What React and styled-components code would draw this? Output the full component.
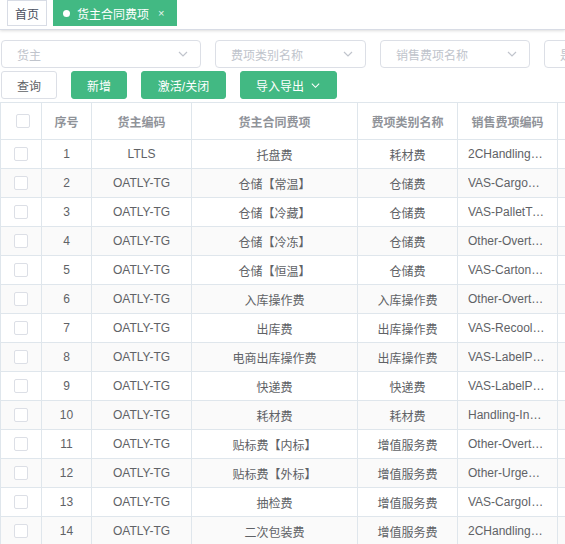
import React from 'react';
import styled, { createGlobalStyle } from 'styled-components';

const GlobalStyle = createGlobalStyle`
  html, body {
    margin: 0;
    padding: 0;
    background: #fff;
    overflow: hidden;
  }
  body {
    font-family: "Liberation Sans", "Noto Sans CJK SC", sans-serif;
    font-size: 12px;
    color: #606266;
  }
  * { box-sizing: border-box; }
`;

const Page = styled.div`
  width: 565px;
  height: 544px;
  overflow: hidden;
`;

const TabBar = styled.div`
  height: 30px;
  display: flex;
  align-items: flex-start;
  gap: 6px;
  padding-left: 7px;
  border-bottom: 1px solid #d8dce5;
  box-shadow: 0 1px 3px 0 rgba(0, 0, 0, 0.12), 0 0 3px 0 rgba(0, 0, 0, 0.04);
`;

const Tab = styled.div`
  height: 26px;
  display: flex;
  align-items: center;
  gap: 6px;
  padding: 0 ${(p) => (p.$active ? '12px' : '7px')} 0 ${(p) => (p.$active ? '9px' : '7px')};
  border: 1px solid ${(p) => (p.$active ? '#42b983' : '#d8dce5')};
  background: ${(p) => (p.$active ? '#42b983' : '#fff')};
  color: ${(p) => (p.$active ? '#fff' : '#495060')};
  font-size: 12px;
  white-space: nowrap;
`;

const Dot = styled.span`
  width: 7px;
  height: 7px;
  border-radius: 50%;
  background: #fff;
  margin-right: 1px;
`;

const Close = styled.span`
  font-size: 11px;
  margin-left: 3px;
  color: #e8f5ef;
`;

const Filters = styled.div`
  display: flex;
  gap: 14px;
  padding: 10px 0 0 1px;
  white-space: nowrap;
`;

const Select = styled.div`
  flex: none;
  width: ${(p) => p.$w}px;
  height: 28px;
  border: 1px solid #dcdfe6;
  border-radius: 4px;
  display: flex;
  align-items: center;
  justify-content: space-between;
  padding: 0 11px 0 15px;
  color: #c0c4cc;
  font-size: 12px;
  overflow: hidden;
`;

const Toolbar = styled.div`
  display: flex;
  gap: 14px;
  padding: 3px 0 0 1px;
`;

const Button = styled.div`
  height: 28px;
  width: ${(p) => p.$w}px;
  display: flex;
  align-items: center;
  justify-content: center;
  gap: 6px;
  border-radius: 3px;
  font-size: 12px;
  border: 1px solid ${(p) => (p.$plain ? '#dcdfe6' : '#42b983')};
  background: ${(p) => (p.$plain ? '#fff' : '#42b983')};
  color: ${(p) => (p.$plain ? '#606266' : '#fff')};
`;

const Table = styled.div`
  margin-top: 3px;
  width: 700px;
  border-left: 1px solid #dfe6ec;
  border-top: 1px solid #dfe6ec;
`;

const Row = styled.div`
  display: grid;
  grid-template-columns: 41px 50px 100px 166px 100px 100px 100px;
  height: ${(p) => (p.$head ? 37 : 29)}px;
  background: ${(p) => (p.$stripe ? '#fafafa' : '#fff')};
`;

const Cell = styled.div`
  border-right: 1px solid #dfe6ec;
  border-bottom: 1px solid #dfe6ec;
  display: flex;
  align-items: center;
  justify-content: ${(p) => (p.$left ? 'flex-start' : 'center')};
  padding: 0 10px;
  overflow: hidden;
  white-space: nowrap;
  font-size: 12px;
  color: ${(p) => (p.$head ? '#909399' : '#606266')};
  font-weight: ${(p) => (p.$head ? 700 : 400)};
`;

const Ellipsis = styled.span`
  overflow: hidden;
  text-overflow: ellipsis;
  display: block;
  max-width: 77px;
`;

const Check = styled.span`
  flex: none;
  width: 14px;
  height: 14px;
  border: 1px solid #dcdfe6;
  border-radius: 2px;
  background: #fff;
  margin-left: ${(p) => (p.$head ? '3px' : '-1px')};
`;

const Chevron = ({ color = '#c0c4cc', size = 12 }) => (
  <svg width={size} height={size} viewBox="0 0 12 12" fill="none">
    <path d="M2 4l4 4 4-4" stroke={color} strokeWidth="1.2" />
  </svg>
);

const rows = [
  ['1', 'LTLS', '托盘费', '耗材费', '2CHandlingPallet'],
  ['2', 'OATLY-TG', '仓储【常温】', '仓储费', 'VAS-CargoStorage'],
  ['3', 'OATLY-TG', '仓储【冷藏】', '仓储费', 'VAS-PalletTurn'],
  ['4', 'OATLY-TG', '仓储【冷冻】', '仓储费', 'Other-Overtime'],
  ['5', 'OATLY-TG', '仓储【恒温】', '仓储费', 'VAS-CartonLabel'],
  ['6', 'OATLY-TG', '入库操作费', '入库操作费', 'Other-Overtime'],
  ['7', 'OATLY-TG', '出库费', '出库操作费', 'VAS-Recooling'],
  ['8', 'OATLY-TG', '电商出库操作费', '出库操作费', 'VAS-LabelPrint'],
  ['9', 'OATLY-TG', '快递费', '快递费', 'VAS-LabelPaste'],
  ['10', 'OATLY-TG', '耗材费', '耗材费', 'Handling-Inbound'],
  ['11', 'OATLY-TG', '贴标费【内标】', '增值服务费', 'Other-Overtime'],
  ['12', 'OATLY-TG', '贴标费【外标】', '增值服务费', 'Other-UrgentOrder'],
  ['13', 'OATLY-TG', '抽检费', '增值服务费', 'VAS-CargoInspect'],
  ['14', 'OATLY-TG', '二次包装费', '增值服务费', '2CHandlingRepack'],
];

export default function App() {
  return (
    <Page>
      <GlobalStyle />
      <TabBar>
        <Tab>首页</Tab>
        <Tab $active>
          <Dot />
          货主合同费项
          <Close>×</Close>
        </Tab>
      </TabBar>
      <Filters>
        <Select $w={200}>货主<Chevron /></Select>
        <Select $w={151}>费项类别名称<Chevron /></Select>
        <Select $w={150}>销售费项名称<Chevron /></Select>
        <Select $w={150}>是否激活<Chevron /></Select>
      </Filters>
      <Toolbar>
        <Button $plain $w={56}>查询</Button>
        <Button $w={56}>新增</Button>
        <Button $w={85}>激活/关闭</Button>
        <Button $w={97}>导入导出<Chevron color="#fff" size={11} /></Button>
      </Toolbar>
      <Table>
        <Row $head>
          <Cell $head><Check $head /></Cell>
          <Cell $head>序号</Cell>
          <Cell $head>货主编码</Cell>
          <Cell $head>货主合同费项</Cell>
          <Cell $head>费项类别名称</Cell>
          <Cell $head>销售费项编码</Cell>
          <Cell $head></Cell>
        </Row>
        {rows.map((r, i) => (
          <Row key={r[0]} $stripe={i % 2 === 1}>
            <Cell><Check /></Cell>
            <Cell>{r[0]}</Cell>
            <Cell>{r[1]}</Cell>
            <Cell>{r[2]}</Cell>
            <Cell>{r[3]}</Cell>
            <Cell $left><Ellipsis>{r[4]}</Ellipsis></Cell>
            <Cell></Cell>
          </Row>
        ))}
      </Table>
    </Page>
  );
}
